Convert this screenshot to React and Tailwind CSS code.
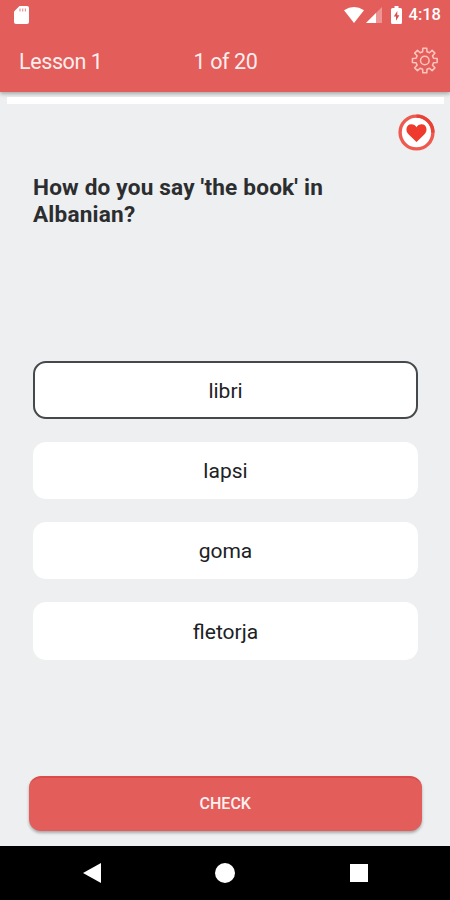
const OPTIONS = [
    { label: 'libri', selected: true },
    { label: 'lapsi' },
    { label: 'goma' },
    { label: 'fletorja' },
];

// Outline of an eight-tooth gear centred on the origin.
function gearPath() {
    const corners = [
        [-14, 9],
        [-9, 12.5],
        [9, 12.5],
        [14, 9],
    ];
    const points = [];
    for (let tooth = 0; tooth < 8; tooth++) {
        corners.forEach(([offset, radius]) => {
            const angle = ((tooth * 45 + offset) * Math.PI) / 180;
            points.push(`${(Math.sin(angle) * radius).toFixed(2)} ${(-Math.cos(angle) * radius).toFixed(2)}`);
        });
    }
    return `M${points.join('L')}Z`;
}

function StatusBar() {
    return (
        <div className="flex h-[29px] items-center pl-[14px] pr-[9px] text-white">
            <svg className="h-[18px] w-[15px]" viewBox="0 0 15 18" fill="currentColor">
                <path d="M5.5 0H13Q15 0 15 2V16Q15 18 13 18H2Q0 18 0 16V5.5Z" />
                <path d="M6 2.5v3M8.7 2.5v3M11.4 2.5v3" stroke="#e35d5b" strokeWidth="1.2" opacity=".65" />
            </svg>
            <svg className="ml-auto h-4 w-5" viewBox="0 0 20 16" fill="currentColor">
                <path d="M0 3.2Q10-3 20 3.2L10 16Z" />
            </svg>
            <svg className="ml-[2px] h-4 w-4" viewBox="0 0 16 16" fill="currentColor">
                <path d="M16 0V16H0Z" opacity=".35" />
                <path d="M10 6V16H0Z" />
            </svg>
            <svg className="ml-[9px] h-[18px] w-[11px]" viewBox="0 0 11 18" fill="currentColor">
                <path d="M3.5 0H7.5V2H9.5Q11 2 11 3.5V16.5Q11 18 9.5 18H1.5Q0 18 0 16.5V3.5Q0 2 1.5 2H3.5Z" />
                <path d="M6.3 5L2.8 10.5H5V14.8L8.4 9.2H6.3Z" fill="#d94f4d" />
            </svg>
            <span className="ml-[7px] pt-[2px] text-[16.5px] leading-none font-medium">4:18</span>
        </div>
    );
}

function Header() {
    return (
        <header className="h-[92px] bg-[#e35d5b] shadow-[0_2px_4px_rgba(0,0,0,0.3)]">
            <StatusBar />
            <div className="grid h-[63px] grid-cols-3 items-center pr-[12px] pl-[19px] text-[21.5px] leading-none tracking-[-0.4px] text-[#ffeded]">
                <span className="pt-[2px]">Lesson 1</span>
                <span className="pt-[2px] pr-[6px] text-center whitespace-nowrap">1 of 20</span>
                <svg className="h-[27px] w-[27px] justify-self-end" viewBox="-13.8 -13.5 27 27" fill="none" stroke="#ffc5bd" strokeWidth="1.5" strokeLinejoin="round">
                    <path d={gearPath()} />
                    <circle r="4.3" />
                </svg>
            </div>
        </header>
    );
}

function HeartBadge() {
    return (
        <svg className="h-[37px] w-[37px]" viewBox="0 0 37 37">
            <circle cx="18.5" cy="18.5" r="16.4" fill="#fff" stroke="#ee5a50" strokeWidth="3.4" />
            <path d="M18.5 2.1A16.4 16.4 0 0 1 34.9 18.5" fill="none" stroke="#e84136" strokeWidth="3.4" />
            <path
                d="M18.5 28L10.5 20.3C6.8 16.5 8.4 10.2 13.2 10.2C15.7 10.2 17.5 11.5 18.5 13.2C19.5 11.5 21.3 10.2 23.8 10.2C28.6 10.2 30.2 16.5 26.5 20.3Z"
                fill="#ee3b2d"
            />
        </svg>
    );
}

function Option({ option }) {
    const border = option.selected ? 'border-2 border-[#46494b]' : '';
    return (
        <button className={`flex h-[57.5px] items-center justify-center rounded-[13px] bg-white pt-[3px] text-[21px] text-[#202124] ${border}`}>
            {option.label}
        </button>
    );
}

function NavBar() {
    return (
        <nav className="flex h-[54px] items-center bg-black pr-[82px] pl-[83px]">
            <svg className="h-5 w-[285px] shrink-0" viewBox="0 0 285 20" fill="#fff">
                <path d="M0 10L18 0V20Z" />
                <circle cx="142" cy="10" r="10" />
                <path d="M267 1H285V19H267Z" />
            </svg>
        </nav>
    );
}

export default function App() {
    return (
        <div className="flex h-[900px] w-[450px] flex-col overflow-hidden bg-[#edeff1] font-['Roboto',sans-serif]">
            <Header />
            <main className="flex flex-1 flex-col">
                <div className="mr-[6px] ml-[7px] mt-[5px] h-[7px] shrink-0 bg-white" />
                <div className="mt-[10px] mr-[15.5px] flex justify-end">
                    <HeartBadge />
                </div>
                <h1 className="mt-[24px] ml-[33px] h-[186.3px] w-[330px] text-[22.6px] leading-[26.5px] font-bold tracking-[0.19px] text-[#2c2d2f]">
                    How do you say 'the book' in Albanian?
                </h1>
                <div className="mr-[32px] ml-[33px] flex flex-col gap-[22.8px]">
                    {OPTIONS.map((option) => (
                        <Option key={option.label} option={option} />
                    ))}
                </div>
                <button className="mt-auto mr-[28.5px] mb-[15.5px] ml-[29px] h-[55px] rounded-[12px] border-t-2 border-[#dc4a4a] bg-[#e35d5b] pb-px text-[16px] font-medium text-[#fff0ef] shadow-[0_2px_3px_rgba(0,0,0,0.3)]">
                    CHECK
                </button>
            </main>
            <NavBar />
        </div>
    );
}
